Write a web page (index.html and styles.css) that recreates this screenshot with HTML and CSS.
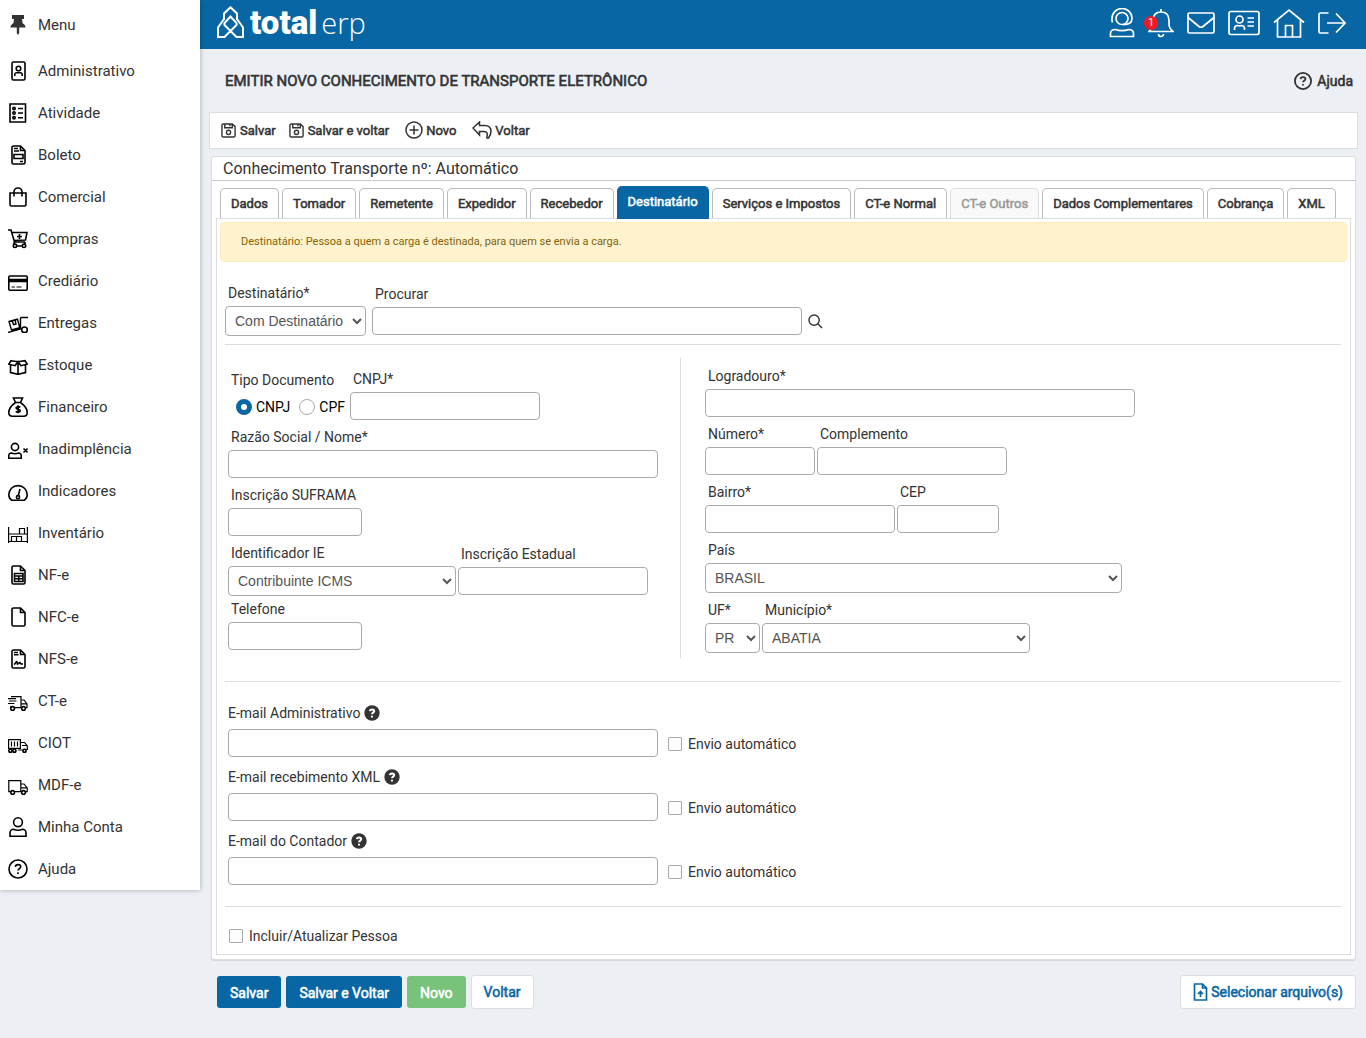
FILE: index.html
```html
<!DOCTYPE html>
<html lang="pt-BR">
<head>
    <meta charset="UTF-8">
    <meta name="viewport" content="width=device-width, initial-scale=1.0">
    <title>Total ERP</title>
    <link rel="stylesheet" href="styles.css">
</head>
<body>
    <!-- Icons used more than once -->
    <svg class="sprite" aria-hidden="true">
        <symbol id="i-disk" viewBox="0 0 16 16"><path d="M2.500 1h9.600L15 3.900v9.600a1.500 1.500 0 0 1-1.500 1.500h-11A1.500 1.500 0 0 1 1 13.500v-11A1.500 1.500 0 0 1 2.500 1zM4 1v4h8V1.500M9.500 1v2.500"/><circle cx="8" cy="10" r="2.200"/></symbol>
        <symbol id="i-help" viewBox="0 0 20 20"><circle cx="10" cy="10" r="9"/><path d="M7.300 7.800C7.500 6.200 8.600 5.600 10 5.600c1.600 0 2.700.9 2.700 2.200 0 1.900-2.700 2-2.700 3.700M10 13.200v1.800"/></symbol>
        <symbol id="i-help-solid" viewBox="0 0 16 16"><circle cx="8" cy="8" r="7.700" fill="#333"/><path d="M5.800 6.200C6 4.900 6.800 4.400 8 4.400c1.300 0 2.200.7 2.200 1.700C10.200 7.700 8 7.600 8 9.300M8 10.700v1.900" fill="none" stroke="#fff" stroke-width="2"/></symbol>
    </svg>

    <!-- Side menu -->
    <nav class="sidebar">
        <a class="menu-toggle" href="#"><svg viewBox="0 0 20 20"><path fill="#333" stroke="none" d="M4 0h12v4h-2l.6 4.200C16.400 9 17.500 10.400 17.500 12.500h-6.300V18L10 20l-1.200-2v-5.500H2.500C2.500 10.400 3.600 9 5.400 8.200L6 4H4z"/></svg>Menu</a>
        <a href="#"><svg viewBox="0 0 20 20"><rect x="4" y="1" width="13" height="18" rx="1.500"/><circle cx="10.500" cy="7.500" r="2.300"/><path d="M6.800 15v-1.500a1.800 1.800 0 0 1 1.800-1.800h3.800a1.800 1.800 0 0 1 1.800 1.800V15"/></svg>Administrativo</a>
        <a href="#"><svg viewBox="0 0 20 20"><path d="M2 1h15.500v18H2zM10 5.500h5M10 10h5M10 14.800h5"/><circle cx="6" cy="5.500" r="1.200"/><circle cx="6" cy="10" r="1.200"/><circle cx="6" cy="14.800" r="1.200"/></svg>Atividade</a>
        <a href="#"><svg viewBox="0 0 20 20"><path d="M12.500 1H5.500A1.500 1.500 0 0 0 4 2.500v15A1.500 1.500 0 0 0 5.500 19h10a1.500 1.500 0 0 0 1.500-1.500V5.500zM12.500 1v4.500H17M6 3.500h4M6 6h5M6 9.500h9v4H6zM12 16.500h3"/></svg>Boleto</a>
        <a href="#"><svg viewBox="0 0 20 20"><path d="M2 6h16v11.500a1.500 1.500 0 0 1-1.500 1.500h-13A1.500 1.500 0 0 1 2 17.500zM6 9.500V5a4 4 0 0 1 8 0v4.500"/></svg>Comercial</a>
        <a href="#"><svg viewBox="0 0 20 20"><path d="M0 1h3l3.500 12H17M4 3.500h15L17.500 11l-11.500.5M9 7.500h5M11.500 5v5"/><circle cx="7" cy="16.800" r="1.700"/><circle cx="16" cy="16.800" r="1.700"/><path d="M6.500 13l-1 2.500M17 13v2M8.500 17h6"/></svg>Compras</a>
        <a href="#"><svg viewBox="0 0 20 20"><rect x=".8" y="5" width="18.400" height="14.200" rx="1"/><path d="M1 9.500h18" stroke-width="3.500"/><path d="M3.500 16H7M8.500 16h5" stroke-width="1.200"/></svg>Crediário</a>
        <a href="#"><svg viewBox="0 0 20 20"><path stroke-width="1.400" d="M1 8.500l8.500-2.300 2.300 8.500L3.500 17zM4.300 7.700l1.200 4 2.500-.7-1-4M0 19.500L12.500 16V5.500a1 1 0 0 1 1-1H20"/><circle cx="16.500" cy="16.800" r="2.800"/></svg>Entregas</a>
        <a href="#"><svg viewBox="0 0 20 20"><path d="M2.500 9v8.500L10 19.300l7.500-1.800V9M10 7.500v12M3 5.700l7 1 7-1 2.200 3.500-6.200 1.500-3-4-3 4L.8 9.200z"/></svg>Estoque</a>
        <a href="#"><svg viewBox="0 0 20 20"><path d="M5.500 1h9l-2 4.500h-5zM7.500 5.500C4 8 .8 11.500.8 15.500c0 2.500 1 3.700 3.500 3.700h11.400c2.500 0 3.500-1.200 3.500-3.700 0-4-3.200-7.500-6.700-10"/><path d="M12.300 10.300c-1-.9-4.300-1-4.300.7 0 1.900 4.300.9 4.300 2.800 0 1.700-3.400 1.700-4.500.6M10.100 8.300v8"/></svg>Financeiro</a>
        <a href="#"><svg viewBox="0 0 20 20"><circle cx="7" cy="8" r="3.600"/><path d="M.8 19.200v-2.700a2.500 2.500 0 0 1 2.500-2.500c2 .8 5.400.8 7.400 0a2.500 2.500 0 0 1 2.500 2.500v2.700zM15.500 9.500l4 4M19.500 9.500l-4 4"/></svg>Inadimplência</a>
        <a href="#"><svg viewBox="0 0 20 20"><path d="M3.500 19.200C1.800 18 .8 16 .8 13.800a9.200 9.200 0 0 1 18.400 0c0 2.200-1 4.200-2.700 5.400zM10.300 14.500L12 8"/><circle cx="10" cy="16.200" r="1.600"/></svg>Indicadores</a>
        <a href="#"><svg viewBox="0 0 20 20"><path stroke-width="1.200" d="M.6 4v16M19.400 4v16M.6 11h18.800M.6 18.500h18.800M11.500 11V5.500h5V11M3.500 18.500v-5h5v5M8.500 13.500h5v5"/></svg>Inventário</a>
        <a href="#"><svg viewBox="0 0 20 20"><path d="M12.500 1H5.500A1.500 1.500 0 0 0 4 2.500v15A1.500 1.500 0 0 0 5.500 19h10a1.500 1.500 0 0 0 1.500-1.500V5.500zM12.500 1v4.500H17M6.500 8.500h8.500v8H6.500zM6.500 11h8.500M6.500 13.800h8.500M10.700 11v5.500"/></svg>NF-e</a>
        <a href="#"><svg viewBox="0 0 20 20"><path d="M12.500 1H5.500A1.500 1.500 0 0 0 4 2.500v15A1.500 1.500 0 0 0 5.500 19h10a1.500 1.500 0 0 0 1.500-1.500V5.500zM12.500 1v4.500H17"/></svg>NFC-e</a>
        <a href="#"><svg viewBox="0 0 20 20"><path d="M12.500 1H5.500A1.500 1.500 0 0 0 4 2.500v15A1.500 1.500 0 0 0 5.500 19h10a1.500 1.500 0 0 0 1.500-1.500V5.500zM12.500 1v4.500H17M6 3.500h4M6 5.800h4.500M6 15.500c1.500-.5 2.500-4 3-2.500l.5 2 2.500-1.500 1 1.500h2"/></svg>NFS-e</a>
        <a href="#"><svg viewBox="0 0 20 20"><path stroke-width="1.200" d="M3 5.600h10v11H7M13 9h3l3 4v3.600h-1M13 12.800h5.500M0 7.600h8M1 10h7.500M0 12.500h6.500M3 15v1.600M12 16.600h1"/><circle cx="4.600" cy="17.500" r="1.900"/><circle cx="15.500" cy="17.500" r="1.900"/></svg>CT-e</a>
        <a href="#"><svg viewBox="0 0 20 20"><path stroke-width="1.200" d="M.6 6.600h11.800v8.800H.6zM3.500 8.500v5M6.500 8.500v5M9.500 8.500v5M13 9.500h3.500l2.800 3.500v3.500h-1M14 12.500h5M10 17h4.500"/><circle cx="2.400" cy="17.800" r="1.600"/><circle cx="6.400" cy="17.800" r="1.600"/><circle cx="16.500" cy="17.800" r="1.600"/></svg>CIOT</a>
        <a href="#"><svg viewBox="0 0 20 20"><path stroke-width="1.200" d="M2.500 16.600H.8v-11h12v11H7M12.800 9H16l3.200 4v3.600h-1.500M13 12.800h6"/><circle cx="4.600" cy="17.500" r="1.900"/><circle cx="15.500" cy="17.500" r="1.900"/></svg>MDF-e</a>
        <a href="#"><svg viewBox="0 0 20 20"><circle cx="10" cy="5.200" r="4.400"/><path d="M2 19.200v-3.400a3.500 3.500 0 0 1 3.500-3.500c2.500 1 6.500 1 9 0a3.500 3.500 0 0 1 3.500 3.500v3.400z"/></svg>Minha Conta</a>
        <a href="#"><svg><use href="#i-help"/></svg>Ajuda</a>
    </nav>

    <div class="page">
        <header class="topbar">
            <a class="logo" href="#">
                <svg viewBox="0 0 28 34"><path d="M8 14V7.500L14.500 1.200 21 7.500V14M8 13l-6 8.500V31h6.500L20 19.500q1.500-1.500 0-3l-5.500-6-5.500 6q-1.500 1.500 0 3L20.500 31H27v-9.500L21 13"/></svg>
                <span class="logo-total">total</span><span class="logo-erp">erp</span>
            </a>
            <div class="top-icons">
                <a href="#" aria-label="Suporte"><svg width="26" height="30" viewBox="0 0 26 30"><circle cx="13" cy="10.500" r="6"/><path d="M3.500 14.500A10 10 0 0 1 3 10.500a10 10 0 0 1 20 0c0 4.500-3.500 6.200-9 6.200M1.500 28.500v-3c0-2.500 2-4 5-4 3.500 1.500 9.500 1.500 13 0 3 0 5 1.500 5 4v3z"/></svg></a>
                <a class="bell" href="#" aria-label="Avisos"><svg width="26" height="30" viewBox="0 0 26 30"><path d="M13 1v3M1 23.500h24c-2.500-2-4-4-4-7.500v-3.500C21 7 18 4 13 4s-8 3-8 8.500V16c0 3.500-1.500 5.500-4 7.500zM10.500 26a2.500 2.500 0 0 0 5 0"/></svg><span class="badge">1</span></a>
                <a href="#" aria-label="Mensagens"><svg width="28" height="30" viewBox="0 0 28 30"><rect x="1" y="5" width="26" height="20" rx="1.500"/><path d="M1 9.500L12 18.500q2 1.500 4 0L27 9.500"/></svg></a>
                <a href="#" aria-label="Cadastro"><svg width="32" height="30" viewBox="0 0 32 30"><rect x="1" y="3.500" width="30" height="23" rx="2"/><circle cx="11.500" cy="11.500" r="3.500"/><path d="M6.500 22v-1.500c0-2 1-3 3-3 1.500.6 2.500.6 4 0 2 0 3 1 3 3V22M19.500 10H26M19.500 14H26M19.500 18H26"/></svg></a>
                <a href="#" aria-label="Início"><svg width="32" height="30" viewBox="0 0 32 30"><path d="M1 14.500L16 2l15 12.500M4.500 12v17h23V12M12.500 29V17.500h7V29"/></svg></a>
                <a href="#" aria-label="Sair"><svg width="28" height="30" viewBox="0 0 28 30"><path d="M10.500 5H2.500A1.500 1.500 0 0 0 1 6.500v17A1.500 1.500 0 0 0 2.500 25h8M9 15h17.500M18 5.500l9 9.500-9 9.500"/></svg></a>
            </div>
        </header>

        <main class="content">
            <div class="title-row">
                <h1>EMITIR NOVO CONHECIMENTO DE TRANSPORTE ELETRÔNICO</h1>
                <a class="help-link" href="#"><svg><use href="#i-help"/></svg>Ajuda</a>
            </div>

            <div class="toolbar">
                <button type="button"><svg><use href="#i-disk"/></svg>Salvar</button>
                <button type="button"><svg><use href="#i-disk"/></svg>Salvar e voltar</button>
                <button type="button" class="wide"><svg viewBox="0 0 18 18"><circle cx="9" cy="9" r="8"/><path d="M9 4.500v9M4.500 9h9"/></svg>Novo</button>
                <button type="button" class="wide"><svg class="back" viewBox="0 0 20 18"><path d="M1 7l6.500-6v3.500h5c4 0 6.500 2.300 6.500 6 0 2.700-1 4.500-2.500 6.500-1.500.5-2 0-1.500-1.500.7-3.500 0-5-3-5H7.500V14z"/></svg>Voltar</button>
            </div>

            <section class="card">
                <h2>Conhecimento Transporte nº: Automático</h2>
                <div class="tabs" role="tablist">
                    <button type="button" role="tab">Dados</button>
                    <button type="button" role="tab">Tomador</button>
                    <button type="button" role="tab">Remetente</button>
                    <button type="button" role="tab">Expedidor</button>
                    <button type="button" role="tab">Recebedor</button>
                    <button type="button" role="tab" class="active" aria-selected="true">Destinatário</button>
                    <button type="button" role="tab">Serviços e Impostos</button>
                    <button type="button" role="tab">CT-e Normal</button>
                    <button type="button" role="tab" disabled>CT-e Outros</button>
                    <button type="button" role="tab">Dados Complementares</button>
                    <button type="button" role="tab">Cobrança</button>
                    <button type="button" role="tab">XML</button>
                </div>

                <form class="pane" id="destinatario">
                    <div class="alert">Destinatário: Pessoa a quem a carga é destinada, para quem se envia a carga.</div>

                    <div class="block search-block">
                        <div class="field">
                            <label for="tem-dest">Destinatário*</label>
                            <select id="tem-dest" class="w-141"><option>Com Destinatário</option><option>Sem Destinatário</option></select>
                        </div>
                        <div class="field">
                            <label for="procurar">Procurar</label>
                            <input type="text" id="procurar" class="w-430">
                        </div>
                        <button type="button" class="search" aria-label="Procurar"><svg viewBox="0 0 16 16"><circle cx="6.500" cy="6.500" r="5.500"/><path d="M10.500 10.500l4.500 4.500"/></svg></button>
                    </div>

                    <div class="block columns">
                        <div class="col-left">
                            <div class="row">
                                <div class="field">
                                    <span class="label">Tipo Documento</span>
                                    <div class="radios">
                                        <label><input type="radio" name="tipo" checked>CNPJ</label>
                                        <label><input type="radio" name="tipo">CPF</label>
                                    </div>
                                </div>
                                <div class="field"><label for="cnpj">CNPJ*</label><input type="text" id="cnpj" class="w-190"></div>
                            </div>
                            <div class="row">
                                <div class="field"><label for="razao">Razão Social / Nome*</label><input type="text" id="razao" class="w-430"></div>
                            </div>
                            <div class="row">
                                <div class="field"><label for="suframa">Inscrição SUFRAMA</label><input type="text" id="suframa" class="w-134"></div>
                            </div>
                            <div class="row tight">
                                <div class="field"><label for="ident-ie">Identificador IE</label><select id="ident-ie" class="w-228"><option>Contribuinte ICMS</option></select></div>
                                <div class="field"><label for="ie">Inscrição Estadual</label><input type="text" id="ie" class="w-190"></div>
                            </div>
                            <div class="row">
                                <div class="field"><label for="telefone">Telefone</label><input type="text" id="telefone" class="w-134"></div>
                            </div>
                        </div>
                        <div class="col-right">
                            <div class="row">
                                <div class="field"><label for="logradouro">Logradouro*</label><input type="text" id="logradouro" class="w-430"></div>
                            </div>
                            <div class="row">
                                <div class="field"><label for="numero">Número*</label><input type="text" id="numero" class="w-110"></div>
                                <div class="field"><label for="complemento">Complemento</label><input type="text" id="complemento" class="w-190"></div>
                            </div>
                            <div class="row">
                                <div class="field"><label for="bairro">Bairro*</label><input type="text" id="bairro" class="w-190"></div>
                                <div class="field"><label for="cep">CEP</label><input type="text" id="cep" class="w-102"></div>
                            </div>
                            <div class="row">
                                <div class="field"><label for="pais">País</label><select id="pais" class="w-417"><option>BRASIL</option></select></div>
                            </div>
                            <div class="row tight">
                                <div class="field"><label for="uf">UF*</label><select id="uf" class="w-55"><option>PR</option></select></div>
                                <div class="field"><label for="municipio">Município*</label><select id="municipio" class="w-268"><option>ABATIA</option></select></div>
                            </div>
                        </div>
                    </div>

                    <div class="block emails">
                        <div class="email">
                            <label for="email-adm">E-mail Administrativo <svg><use href="#i-help-solid"/></svg></label>
                            <div class="email-line">
                                <input type="text" id="email-adm" class="w-430">
                                <label class="check"><input type="checkbox">Envio automático</label>
                            </div>
                        </div>
                        <div class="email">
                            <label for="email-xml">E-mail recebimento XML <svg><use href="#i-help-solid"/></svg></label>
                            <div class="email-line">
                                <input type="text" id="email-xml" class="w-430">
                                <label class="check"><input type="checkbox">Envio automático</label>
                            </div>
                        </div>
                        <div class="email">
                            <label for="email-cont">E-mail do Contador <svg><use href="#i-help-solid"/></svg></label>
                            <div class="email-line">
                                <input type="text" id="email-cont" class="w-430">
                                <label class="check"><input type="checkbox">Envio automático</label>
                            </div>
                        </div>
                    </div>

                    <div class="save-person">
                        <label class="check"><input type="checkbox">Incluir/Atualizar Pessoa</label>
                    </div>
                </form>
            </section>

            <div class="actions">
                <button type="button" class="btn">Salvar</button>
                <button type="button" class="btn">Salvar e Voltar</button>
                <button type="button" class="btn btn-green">Novo</button>
                <button type="button" class="btn btn-white">Voltar</button>
                <button type="button" class="btn btn-white btn-file"><svg viewBox="0 0 14 18"><path d="M9 1H1v16h12V5zM9 1v4h4M7 14V8.500M4.500 11L7 8.500 9.500 11"/></svg>Selecionar arquivo(s)</button>
            </div>
        </main>
    </div>
</body>
</html>
```
FILE: styles.css
```css
* {
    box-sizing: border-box;
}
body {
    display: flex;
    align-items: flex-start;
    margin: 0;
    min-height: 100vh;
    background: #ecf0f5;
    color: #333;
    font-family: Roboto, sans-serif;
    font-size: 14px;
    line-height: 18px;
}
a {
    color: inherit;
    text-decoration: none;
}
button {
    font-family: inherit;
    color: inherit;
    cursor: pointer;
}
svg {
    fill: none;
    stroke: currentColor;
    flex-shrink: 0;
}
.sprite {
    display: none;
}

/* side menu */
.sidebar {
    position: relative;
    z-index: 1;
    flex: 0 0 200px;
    background: #fff;
    box-shadow: 0 0 5px rgba(0, 0, 0, 0.3);
    font-size: 15px;
}
.sidebar a {
    display: flex;
    align-items: center;
    gap: 10px;
    height: 42px;
    padding: 0 8px;
}
.sidebar .menu-toggle {
    height: 50px;
}
.sidebar svg {
    width: 20px;
    height: 20px;
    color: #000;
    stroke-width: 1.6;
}

/* top bar */
.page {
    flex: 1;
    min-width: 0;
}
.topbar {
    display: flex;
    justify-content: space-between;
    align-items: center;
    height: 49px;
    padding: 0 20px 3px 16px;
    background: #0866a5;
    color: #fff;
}
.logo {
    display: flex;
    align-items: center;
    line-height: 40px;
}
.logo svg {
    width: 28px;
    height: 34px;
    margin-right: 6px;
    stroke-width: 2;
}
.logo-total {
    font-size: 33px;
    font-weight: 900;
}
.logo-erp {
    margin-left: 4px;
    font-family: "Open Sans", sans-serif;
    font-size: 29px;
    font-weight: 300;
}
.top-icons {
    display: flex;
    gap: 13px;
}
.top-icons svg {
    display: block;
    stroke-width: 1.7;
}
.bell {
    position: relative;
}
.badge {
    position: absolute;
    top: 8px;
    left: -4px;
    width: 14px;
    height: 14px;
    border-radius: 50%;
    background: #ed1c24;
    font-size: 11px;
    line-height: 14px;
    text-align: center;
}

/* emboldened regular face */
h1,
.help-link,
.toolbar button,
.tabs button,
.btn {
    font-weight: 400;
    -webkit-text-stroke: 0.04em currentColor;
}

/* page title and toolbar */
.content {
    padding: 0 8px 29px 9px;
}
.title-row {
    display: flex;
    justify-content: space-between;
    align-items: center;
    height: 63px;
    padding: 1px 5px 0 16px;
}
h1 {
    margin: 0;
    font-size: 15px;
}
.help-link {
    display: flex;
    align-items: center;
    gap: 5px;
}
.help-link svg {
    width: 18px;
    height: 18px;
    stroke-width: 2;
}
.toolbar {
    display: flex;
    align-items: center;
    gap: 13px;
    height: 37px;
    padding: 0 11px 1px;
    border: 1px solid #ddd;
    background: #fff;
}
.toolbar button {
    display: flex;
    align-items: center;
    gap: 4px;
    padding: 0;
    border: 0;
    background: none;
    font-size: 13px;
}
.toolbar .wide {
    gap: 3px;
    margin-left: 3px;
}
.toolbar svg {
    width: 15px;
    height: 15px;
    stroke-width: 1.5;
}
.toolbar .wide svg {
    width: 18px;
    height: 18px;
}
.toolbar .wide .back {
    width: 20px;
}

/* card with tabs */
.card {
    margin: 7px 2px 0;
    padding-bottom: 4px;
    border: 1px solid #ddd;
    border-radius: 3px;
    background: #fff;
    box-shadow: 0 1px 1px rgba(0, 0, 0, 0.1);
}
h2 {
    margin: 0;
    height: 24px;
    padding-left: 11px;
    border-bottom: 1px solid #ccc;
    font-size: 16px;
    font-weight: 400;
    line-height: 23px;
}
.tabs {
    display: flex;
    align-items: flex-end;
    gap: 3px;
    padding: 5px 8px 0;
}
.tabs button {
    height: 30px;
    padding: 0 10px;
    border: 1px solid #bbb;
    border-bottom: 0;
    border-radius: 5px 5px 0 0;
    background: #fff;
    font-size: 13px;
    white-space: nowrap;
}
.tabs .active {
    height: 33px;
    margin-bottom: -1px;
    padding-bottom: 4px;
    border-color: #0866a5;
    background: #0866a5;
    color: #fff;
}
.tabs button:disabled {
    border-color: #ddd;
    background: #f9f9f9;
    color: #999;
}
.pane {
    margin: 0 4px;
    padding: 3px;
    border: 1px solid #ddd;
}
.alert {
    padding: 10px 20px;
    border: 1px solid #ffeeba;
    border-radius: 4px;
    background: #fff2cf;
    color: #856404;
    font-size: 11px;
}

/* form */
.block {
    margin: 0 6px 0 5px;
    border-bottom: 1px solid #ddd;
}
input[type="text"],
select {
    display: block;
    height: 28px;
    padding: 0 5px;
    border: 1px solid #aaa;
    border-radius: 4px;
    background: #fff;
    color: #555;
    font-family: "Liberation Sans", Arial, sans-serif;
    font-size: 14px;
}
select {
    height: 30px;
}
.field > label,
.field > .label {
    display: block;
    margin-bottom: 4px;
    padding-left: 3px;
}
.search-block {
    display: flex;
    align-items: center;
    gap: 6px;
    padding: 22px 0 8px;
}
.search {
    align-self: flex-end;
    height: 30px;
    padding: 0;
    border: 0;
    background: none;
}
.search svg {
    display: block;
    width: 15px;
    height: 15px;
    stroke-width: 1.5;
}
.columns {
    display: flex;
    padding: 13px 0 23px;
}
.col-left {
    width: 456px;
    padding: 12px 0 0 3px;
    border-right: 1px solid #ddd;
}
.col-right {
    flex: 1;
    padding: 9px 0 0 24px;
}
.row {
    display: flex;
    align-items: center;
    gap: 2px;
    margin-bottom: 8px;
}
.row.tight {
    margin-bottom: 4px;
}
.radios {
    display: flex;
    gap: 9px;
    height: 26px;
    width: 120px;
    padding: 1px 0 0 8px;
    color: #000;
    white-space: nowrap;
}
.radios label {
    display: flex;
    align-items: center;
    gap: 4px;
}
.radios input {
    appearance: none;
    width: 16px;
    height: 16px;
    margin: 0;
    border: 1px solid #aaa;
    border-radius: 50%;
    background: #fff;
}
.radios input:checked {
    border: 5px solid #0866a5;
}
.emails {
    padding: 22px 0 10px 3px;
}
.email {
    margin-bottom: 11px;
}
.email > label {
    display: flex;
    align-items: center;
    gap: 4px;
    margin-bottom: 7px;
}
.email svg {
    width: 16px;
    height: 16px;
    stroke: none;
}
.email-line {
    display: flex;
    align-items: center;
    gap: 10px;
}
.check {
    display: flex;
    align-items: center;
    gap: 6px;
}
.email-line .check {
    padding-top: 2px;
}
.check input {
    appearance: none;
    width: 14px;
    height: 14px;
    margin: 0;
    border: 1px solid #aaa;
    border-radius: 1px;
    background: #fff;
}
.save-person {
    display: flex;
    padding: 20px 9px 6px;
}
.w-55 { width: 55px; }
.w-102 { width: 102px; }
.w-110 { width: 110px; }
.w-134 { width: 134px; }
.w-141 { width: 141px; }
.w-190 { width: 190px; }
.w-228 { width: 228px; }
.w-268 { width: 268px; }
.w-417 { width: 417px; }
.w-430 { width: 430px; }

/* bottom buttons */
.actions {
    display: flex;
    align-items: center;
    gap: 5px;
    padding: 15px 2px 0 8px;
}
.btn {
    height: 32px;
    padding: 1px 13px 0;
    border: 0;
    border-radius: 3px;
    background: #0866a5;
    color: #fff;
    font-size: 14px;
}
.btn-green {
    background: #78c27a;
}
.btn-white {
    height: 34px;
    padding: 0 12px;
    border: 1px solid #ddd;
    background: #fff;
    color: #0866a5;
}
.btn-file {
    display: flex;
    align-items: center;
    gap: 3px;
    margin-left: auto;
}
.btn-file svg {
    width: 15px;
    height: 18px;
    stroke-width: 1.7;
}
```
